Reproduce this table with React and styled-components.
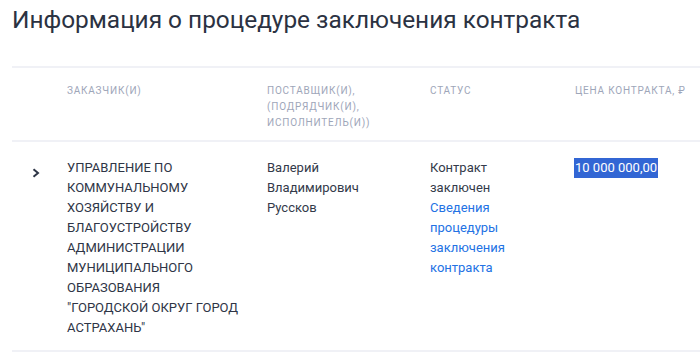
import React from 'react';
import styled, { createGlobalStyle } from 'styled-components';

const Global = createGlobalStyle`
    body {
        margin: 0;
        background: #ffffff;
        font-family: 'Roboto', 'Liberation Sans', sans-serif;
    }
`;

const Page = styled.div`
    padding: 6px 0 0 12px;
`;

const Title = styled.h1`
    margin: 0 0 32px 0;
    font-size: 24.4px;
    line-height: 28px;
    font-weight: 400;
    color: #2b3242;
`;

const Row = styled.div`
    display: grid;
    grid-template-columns: 55px 200px 163px 145px 1fr;
    border-top: 2px solid #f0f1f6;
    padding: ${props => props.head ? '15px 0 9px' : '16px 0 12px'};
    &:last-child {
        border-bottom: 2px solid #f0f1f6;
    }
`;

const HeadCell = styled.div`
    padding-right: 28px;
    font-size: 10px;
    line-height: 16px;
    letter-spacing: 0.8px;
    text-transform: uppercase;
    color: #9ea6b9;
    &:last-child {
        padding-right: 0;
    }
`;

const Cell = styled.div`
    padding-right: 28px;
    font-size: 13px;
    line-height: 20px;
    color: ${props => props.caps ? '#2e3546' : '#333a4a'};
    &:last-child {
        padding-right: 0;
    }
`;

const Toggle = styled.div`
    padding: 5px 0 0 20px;
    color: #2e3546;
`;

const Link = styled.a`
    display: block;
    color: #2372e4;
    text-decoration: none;
`;

const Price = styled.span`
    display: inline-block;
    background: #3266d4;
    color: #ffffff;
    font-size: 13px;
    line-height: 20px;
    padding: 0 1px;
    margin-left: -1px;
`;

const Chevron = () => (
    <svg width="8" height="10" viewBox="0 0 8 10">
        <polyline points="1.5,1.2 6,5 1.5,8.8" fill="none" stroke="currentColor" strokeWidth="2" />
    </svg>
);

export default () => {
    return <>
        <Global />
        <Page>
            <Title>Информация о процедуре заключения контракта</Title>
            <div>
                <Row head>
                    <HeadCell />
                    <HeadCell>Заказчик(и)</HeadCell>
                    <HeadCell>Поставщик(и), (подрядчик(и), исполнитель(и))</HeadCell>
                    <HeadCell>Статус</HeadCell>
                    <HeadCell>Цена контракта, ₽</HeadCell>
                </Row>
                <Row>
                    <Toggle><Chevron /></Toggle>
                    <Cell caps>УПРАВЛЕНИЕ ПО КОММУНАЛЬНОМУ ХОЗЯЙСТВУ И БЛАГОУСТРОЙСТВУ АДМИНИСТРАЦИИ МУНИЦИПАЛЬНОГО ОБРАЗОВАНИЯ "ГОРОДСКОЙ ОКРУГ ГОРОД АСТРАХАНЬ"</Cell>
                    <Cell>Валерий Владимирович Руссков</Cell>
                    <Cell>
                        Контракт заключен
                        <Link href="#">Сведения процедуры заключения контракта</Link>
                    </Cell>
                    <Cell><Price>10 000 000,00</Price></Cell>
                </Row>
            </div>
        </Page>
    </>;
}
